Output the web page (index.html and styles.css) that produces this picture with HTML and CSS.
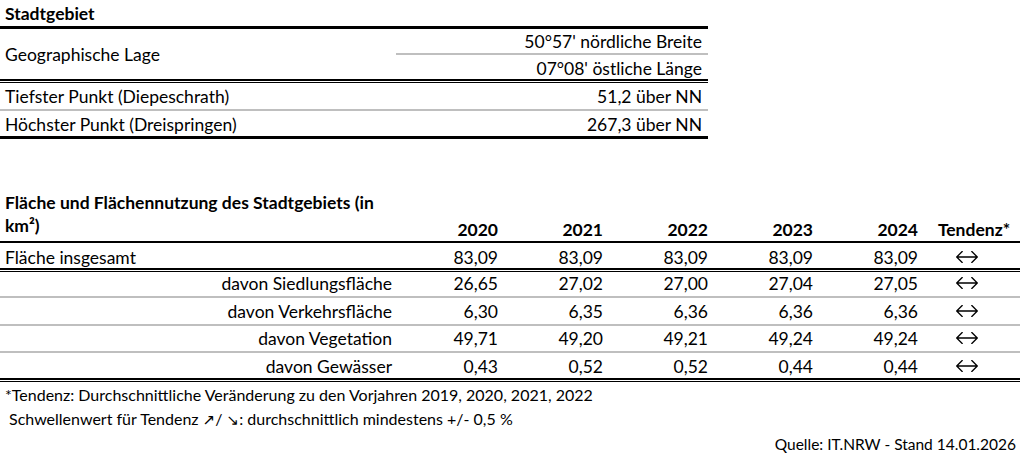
FILE: index.html
```html
<!DOCTYPE html>
<html lang="de">
<head>
<meta charset="utf-8">
<title>Stadtgebiet</title>
<link rel="stylesheet" href="styles.css">
</head>
<body>
<table class="geo">
  <colgroup><col class="geo-label"><col class="geo-value"></colgroup>
  <tr class="title-row">
    <th class="title" colspan="2">Stadtgebiet</th>
  </tr>
  <tr class="lage-1">
    <td class="lage-label" rowspan="2">Geographische Lage</td>
    <td class="val">50°57' nördliche Breite</td>
  </tr>
  <tr class="lage-2">
    <td class="val">07°08' östliche Länge</td>
  </tr>
  <tr class="tief">
    <td>Tiefster Punkt (Diepeschrath)</td>
    <td class="val">51,2 über NN</td>
  </tr>
  <tr class="hoch">
    <td>Höchster Punkt (Dreispringen)</td>
    <td class="val">267,3 über NN</td>
  </tr>
</table>

<table class="flaeche">
  <colgroup>
    <col class="f-label">
    <col class="f-year"><col class="f-year"><col class="f-year"><col class="f-year"><col class="f-year">
    <col class="f-trend">
  </colgroup>
  <tr class="head">
    <th class="f-title">Fläche und Flächennutzung des Stadtgebiets (in km²)</th>
    <th class="num">2020</th>
    <th class="num">2021</th>
    <th class="num">2022</th>
    <th class="num">2023</th>
    <th class="num">2024</th>
    <th class="trend">Tendenz*</th>
  </tr>
  <tr class="total">
    <td class="lbl">Fläche insgesamt</td>
    <td class="num">83,09</td><td class="num">83,09</td><td class="num">83,09</td><td class="num">83,09</td><td class="num">83,09</td>
    <td class="trend"><svg class="lr" viewBox="0 0 22 12" aria-label="↔"><path d="M0.7 6H21.3M6.2 0.5L0.7 6L6.2 11.5M15.8 0.5L21.3 6L15.8 11.5"/></svg></td>
  </tr>
  <tr class="sub r-sied">
    <td class="lbl sub-lbl">davon Siedlungsfläche</td>
    <td class="num">26,65</td><td class="num">27,02</td><td class="num">27,00</td><td class="num">27,04</td><td class="num">27,05</td>
    <td class="trend"><svg class="lr" viewBox="0 0 22 12" aria-label="↔"><path d="M0.7 6H21.3M6.2 0.5L0.7 6L6.2 11.5M15.8 0.5L21.3 6L15.8 11.5"/></svg></td>
  </tr>
  <tr class="sub r-verk">
    <td class="lbl sub-lbl">davon Verkehrsfläche</td>
    <td class="num">6,30</td><td class="num">6,35</td><td class="num">6,36</td><td class="num">6,36</td><td class="num">6,36</td>
    <td class="trend"><svg class="lr" viewBox="0 0 22 12" aria-label="↔"><path d="M0.7 6H21.3M6.2 0.5L0.7 6L6.2 11.5M15.8 0.5L21.3 6L15.8 11.5"/></svg></td>
  </tr>
  <tr class="sub r-veg">
    <td class="lbl sub-lbl">davon Vegetation</td>
    <td class="num">49,71</td><td class="num">49,20</td><td class="num">49,21</td><td class="num">49,24</td><td class="num">49,24</td>
    <td class="trend"><svg class="lr" viewBox="0 0 22 12" aria-label="↔"><path d="M0.7 6H21.3M6.2 0.5L0.7 6L6.2 11.5M15.8 0.5L21.3 6L15.8 11.5"/></svg></td>
  </tr>
  <tr class="sub r-gew">
    <td class="lbl sub-lbl">davon Gewässer</td>
    <td class="num">0,43</td><td class="num">0,52</td><td class="num">0,52</td><td class="num">0,44</td><td class="num">0,44</td>
    <td class="trend"><svg class="lr" viewBox="0 0 22 12" aria-label="↔"><path d="M0.7 6H21.3M6.2 0.5L0.7 6L6.2 11.5M15.8 0.5L21.3 6L15.8 11.5"/></svg></td>
  </tr>
</table>

<div class="notes">
  <p class="note">*Tendenz: Durchschnittliche Veränderung zu den Vorjahren 2019, 2020, 2021, 2022</p>
  <p class="note note-indent">Schwellenwert für Tendenz <span class="arr">↗</span>/ <span class="arr">↘</span>: durchschnittlich mindestens +/- 0,5 %</p>
  <p class="source">Quelle: IT.NRW - Stand 14.01.2026</p>
</div>
</body>
</html>
```

FILE: styles.css
```css
html, body {
  margin: 0;
  padding: 0;
  background: #ffffff;
}

body {
  font-family: Lato, "Liberation Sans", sans-serif;
  font-size: 17.5px;
  color: #000000;
  width: 1028px;
}

table {
  border-collapse: separate;
  border-spacing: 0;
  table-layout: fixed;
}

td, th {
  padding: 0;
  line-height: 20px;
  white-space: nowrap;
  vertical-align: bottom;
}

th {
  font-weight: 700;
}

/* ---------- Stadtgebiet ---------- */
.geo {
  width: 708px;
}

.geo-label { width: 396px; }
.geo-value { width: 312px; }

.geo td {
  padding-left: 5px;
}

.geo .val {
  text-align: right;
  padding-left: 0;
  padding-right: 6px;
}

.geo .title {
  text-align: left;
  padding: 4px 0 2px 5px;
  border-bottom: 3px solid #000;
}

.lage-1 .val {
  padding-top: 3px;
  padding-bottom: 1px;
  border-bottom: 2px solid #bfbfbf;
}

.lage-label {
  vertical-align: middle;
  border-bottom: 3px double #000;
  box-shadow: inset 0 -1px 0 #000;
}

.lage-2 .val {
  padding-top: 4px;
  padding-bottom: 1px;
  border-bottom: 3px double #000;
  box-shadow: inset 0 -1px 0 #000;
}

.tief td {
  padding-top: 4px;
  padding-bottom: 2px;
  border-bottom: 2px solid #bfbfbf;
}

.hoch td {
  padding-top: 4px;
  padding-bottom: 1px;
  border-bottom: 3px solid #000;
}

/* ---------- Fläche ---------- */
.flaeche {
  width: 1020px;
  margin-top: 51px;
}

.f-label { width: 397px; }
.f-year  { width: 105px; }
.f-trend { width: 98px; }

.head th {
  padding-bottom: 1px;
  border-bottom: 2px solid #000;
}

.head .f-title {
  text-align: left;
  white-space: normal;
  line-height: 23px;
  padding: 1px 0 4px 5px;
}

.num {
  text-align: right;
  padding-right: 4px;
}

.trend {
  text-align: center;
}

th.trend {
  padding-left: 6px;
}

td.trend {
  padding-right: 8px;
}

.lr {
  width: 22px;
  height: 12px;
  vertical-align: 1px;
  fill: none;
  stroke: #000;
  stroke-width: 1.3;
  stroke-linecap: round;
  stroke-linejoin: miter;
}

.lbl {
  padding-left: 5px;
}

.sub-lbl {
  text-align: right;
  padding-left: 0;
  padding-right: 5px;
}

.total td {
  padding-top: 5px;
  padding-bottom: 1px;
  border-bottom: 3px double #000;
  box-shadow: inset 0 -1px 0 #000;
}

.r-sied td {
  padding-top: 2px;
  padding-bottom: 2px;
  border-bottom: 2px solid #bfbfbf;
}

.r-verk td {
  padding-top: 4px;
  padding-bottom: 2px;
  border-bottom: 2px solid #bfbfbf;
}

.r-veg td {
  padding-top: 3px;
  padding-bottom: 2px;
  border-bottom: 2px solid #bfbfbf;
}

.r-gew td {
  padding-top: 4px;
  padding-bottom: 2px;
  border-bottom: 3px double #000;
  box-shadow: inset 0 -1px 0 #000;
}

/* ---------- Notes ---------- */
.notes {
  width: 1020px;
  padding-top: 1px;
  font-size: 16px;
  line-height: 24px;
}

.note {
  margin: 0;
  padding-left: 5px;
  white-space: nowrap;
}

.note-indent {
  padding-left: 9px;
}

.arr {
  font-family: "DejaVu Sans", sans-serif;
  font-size: 15px;
}

.source {
  margin: 0;
  font-size: 15.5px;
  text-align: right;
  padding-right: 4px;
}
```
